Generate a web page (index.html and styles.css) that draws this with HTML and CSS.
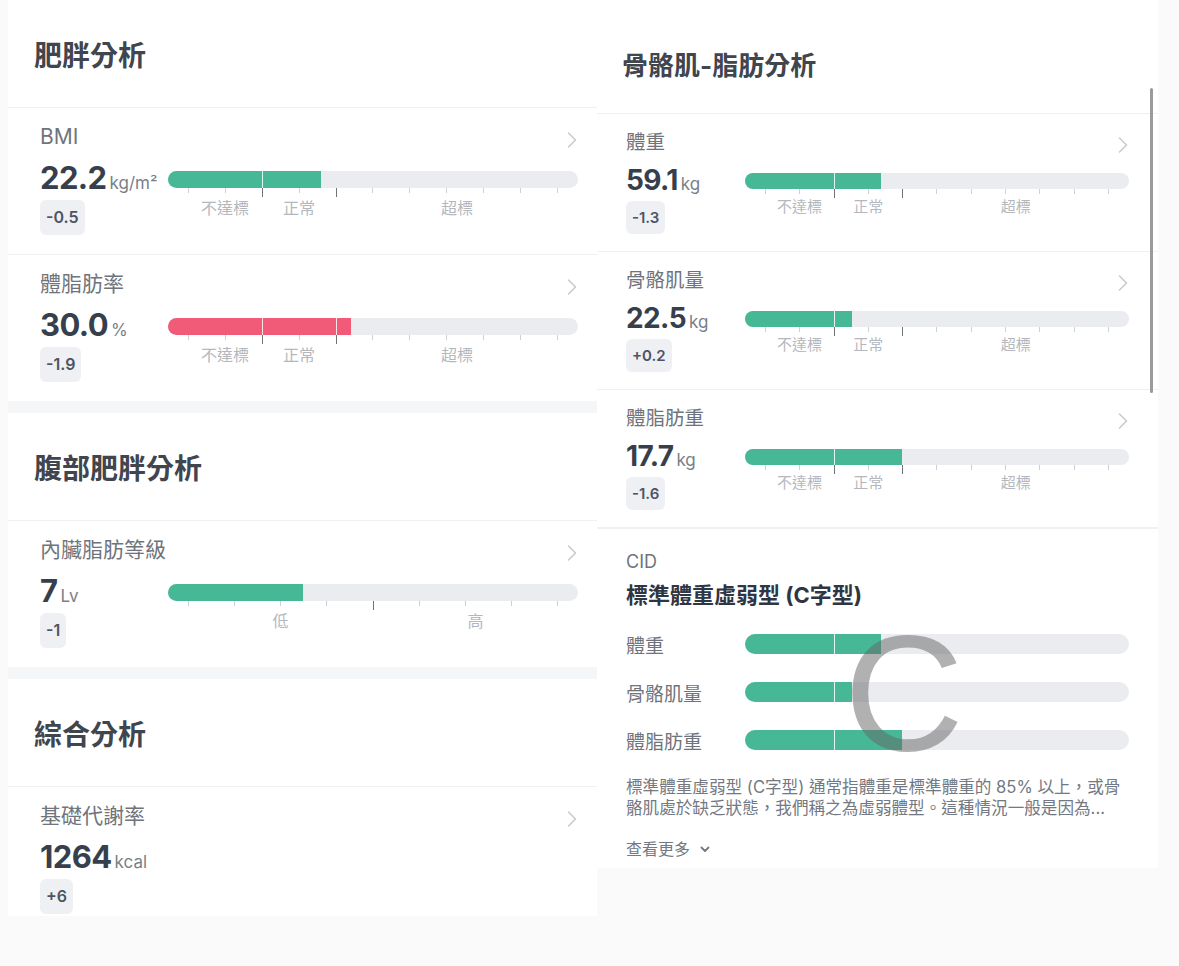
FILE: index.html
```html
<!DOCTYPE html>
<html lang="zh-Hant">
<head>
  <meta charset="UTF-8">
  <meta name="viewport" content="width=device-width, initial-scale=1.0">
  <title>身體組成分析</title>
  <link rel="stylesheet" href="styles.css">
</head>
<body>
<div class="page">

  <!-- Left column: obesity / abdominal / overall -->
  <div class="col col-left">

    <section class="card">
      <h2 class="card-title">肥胖分析</h2>

      <div class="metric">
        <div class="metric-head"><span class="metric-name">BMI</span><svg class="chev" viewBox="0 0 12 18"><polyline points="2.5,2 9.5,9 2.5,16"/></svg></div>
        <div class="metric-value"><b>22.2</b><span class="unit">kg/m²</span></div>
        <div class="gauge three">
          <div class="track"><div class="fill" style="width:37.3%"></div></div>
          <div class="ticks"><i></i><i></i><i class="major"></i><i></i><i class="major"></i><i></i><i></i><i></i><i></i><i></i><i></i></div>
          <div class="marks"><span>不達標</span><span>正常</span><span>超標</span></div>
        </div>
        <div class="delta">-0.5</div>
      </div>

      <div class="metric">
        <div class="metric-head"><span class="metric-name">體脂肪率</span><svg class="chev" viewBox="0 0 12 18"><polyline points="2.5,2 9.5,9 2.5,16"/></svg></div>
        <div class="metric-value"><b>30.0</b><span class="unit">%</span></div>
        <div class="gauge three">
          <div class="track"><div class="fill warn" style="width:44.6%"></div></div>
          <div class="ticks"><i></i><i></i><i class="major"></i><i></i><i class="major"></i><i></i><i></i><i></i><i></i><i></i><i></i></div>
          <div class="marks"><span>不達標</span><span>正常</span><span>超標</span></div>
        </div>
        <div class="delta">-1.9</div>
      </div>
    </section>

    <section class="card">
      <h2 class="card-title">腹部肥胖分析</h2>

      <div class="metric">
        <div class="metric-head"><span class="metric-name">內臟脂肪等級</span><svg class="chev" viewBox="0 0 12 18"><polyline points="2.5,2 9.5,9 2.5,16"/></svg></div>
        <div class="metric-value"><b>7</b><span class="unit">Lv</span></div>
        <div class="gauge two">
          <div class="track"><div class="fill" style="width:32.9%"></div></div>
          <div class="ticks"><i></i><i></i><i></i><i></i><i class="major"></i><i></i><i></i><i></i><i></i></div>
          <div class="marks"><span>低</span><span>高</span></div>
        </div>
        <div class="delta">-1</div>
      </div>
    </section>

    <section class="card">
      <h2 class="card-title">綜合分析</h2>

      <div class="metric cut">
        <div class="metric-head"><span class="metric-name">基礎代謝率</span><svg class="chev" viewBox="0 0 12 18"><polyline points="2.5,2 9.5,9 2.5,16"/></svg></div>
        <div class="metric-value"><b>1264</b><span class="unit">kcal</span></div>
        <div class="delta">+6</div>
      </div>
    </section>
  </div>

  <!-- Right column: skeletal muscle / fat + CID -->
  <div class="col col-right">
    <section class="card">
      <h2 class="card-title">骨骼肌-脂肪分析</h2>

      <div class="metric">
        <div class="metric-head"><span class="metric-name">體重</span><svg class="chev" viewBox="0 0 12 18"><polyline points="2.5,2 9.5,9 2.5,16"/></svg></div>
        <div class="metric-value"><b>59.1</b><span class="unit">kg</span></div>
        <div class="gauge three">
          <div class="track"><div class="fill" style="width:35.4%"></div></div>
          <div class="ticks"><i></i><i></i><i class="major"></i><i></i><i class="major"></i><i></i><i></i><i></i><i></i><i></i><i></i></div>
          <div class="marks"><span>不達標</span><span>正常</span><span>超標</span></div>
        </div>
        <div class="delta">-1.3</div>
      </div>

      <div class="metric">
        <div class="metric-head"><span class="metric-name">骨骼肌量</span><svg class="chev" viewBox="0 0 12 18"><polyline points="2.5,2 9.5,9 2.5,16"/></svg></div>
        <div class="metric-value"><b>22.5</b><span class="unit">kg</span></div>
        <div class="gauge three">
          <div class="track"><div class="fill" style="width:27.9%"></div></div>
          <div class="ticks"><i></i><i></i><i class="major"></i><i></i><i class="major"></i><i></i><i></i><i></i><i></i><i></i><i></i></div>
          <div class="marks"><span>不達標</span><span>正常</span><span>超標</span></div>
        </div>
        <div class="delta">+0.2</div>
      </div>

      <div class="metric">
        <div class="metric-head"><span class="metric-name">體脂肪重</span><svg class="chev" viewBox="0 0 12 18"><polyline points="2.5,2 9.5,9 2.5,16"/></svg></div>
        <div class="metric-value"><b>17.7</b><span class="unit">kg</span></div>
        <div class="gauge three">
          <div class="track"><div class="fill" style="width:40.9%"></div></div>
          <div class="ticks"><i></i><i></i><i class="major"></i><i></i><i class="major"></i><i></i><i></i><i></i><i></i><i></i><i></i></div>
          <div class="marks"><span>不達標</span><span>正常</span><span>超標</span></div>
        </div>
        <div class="delta">-1.6</div>
      </div>

      <!-- CID body type -->
      <div class="cid">
        <div class="cid-kicker">CID</div>
        <div class="cid-title">標準體重虛弱型 (C字型)</div>
        <div class="cid-rows">
          <div class="cid-row"><span>體重</span><div class="track"><div class="fill" style="width:35.4%"></div></div></div>
          <div class="cid-row"><span>骨骼肌量</span><div class="track"><div class="fill" style="width:27.9%"></div></div></div>
          <div class="cid-row"><span>體脂肪重</span><div class="track"><div class="fill" style="width:40.9%"></div></div></div>
          <span class="cid-letter">C</span>
        </div>
        <p class="cid-desc">標準體重虛弱型 (C字型) 通常指體重是標準體重的 85% 以上，或骨<br>骼肌處於缺乏狀態，我們稱之為虛弱體型。這種情況一般是因為...</p>
        <div class="more">查看更多 <svg class="chev-down" viewBox="0 0 10 7"><polyline points="1.5,1.5 5,5 8.5,1.5"/></svg></div>
      </div>
    </section>

    <div class="scroll-thumb"></div>
  </div>

</div>
</body>
</html>
```

FILE: styles.css
```css
/* Page */
body {
  margin: 0;
  background-color: #fafafa;
  font-family: Inter, "Noto Sans CJK TC", sans-serif;
  color: #394150;
}

.page {
  display: flex;
  align-items: flex-start;
  width: 1179px;
  height: 966px;
  overflow: hidden;
}

/* Columns */
.col-left {
  --lw: 128px;
  --bw: 410px;
  margin-left: 8px;
  width: 589px;
  display: flex;
  flex-direction: column;
  gap: 12px;
  background-color: #f5f6f8;
}

.col-right {
  --lw: 119px;
  --bw: 384px;
  position: relative;
  width: 561px;
}

.card {
  background: #fff;
}

/* Section title */
.card-title {
  margin: 0;
  padding: 38px 0 33px 26px;
  font-size: 28px;
  line-height: 36px;
  font-weight: 700;
  color: #40454e;
  border-bottom: 1px solid #eff0f2;
}

.col-right .card-title {
  padding: 49px 0 30px 25px;
  font-size: 26px;
  line-height: 34px;
}

/* Metric row */
.metric {
  display: grid;
  grid-template-columns: var(--lw) var(--bw);
  padding: 18px 19px 19px 32px;
  border-bottom: 1px solid #eff0f2;
}

.metric:last-child {
  border-bottom: none;
}

.metric.cut {
  padding-bottom: 2px;
}

.metric-head {
  grid-column: 1 / -1;
  display: flex;
  justify-content: space-between;
  align-items: center;
  height: 22px;
  margin-bottom: 12px;
}

.metric-name {
  font-size: 21px;
  line-height: 22px;
  color: #6f747c;
}

.chev {
  width: 12px;
  height: 18px;
  margin-top: 5px;
  fill: none;
  stroke: #c9cbcf;
  stroke-width: 1.6;
  stroke-linecap: round;
  stroke-linejoin: round;
}

.metric-value {
  grid-column: 1;
  grid-row: 2;
  display: flex;
  align-items: baseline;
  height: 36px;
  line-height: 36px;
}

.metric-value b {
  font-size: 31px;
  font-weight: 700;
  letter-spacing: -0.6px;
  color: #383f4c;
}

.unit {
  margin-left: 3px;
  font-size: 17px;
  color: #7a7f87;
}

.delta {
  grid-column: 1;
  grid-row: 3;
  justify-self: start;
  margin-top: 4px;
  height: 35px;
  padding: 0 6px;
  line-height: 35px;
  font-size: 16px;
  font-weight: 600;
  color: #4d5463;
  background-color: #eef0f3;
  border-radius: 6px;
}

/* Gauge bar */
.gauge {
  grid-column: 2;
  grid-row: 2 / span 2;
  align-self: start;
  margin-top: 11px;
}

.track {
  height: 17px;
  border-radius: 9px;
  background-color: #ebecf0;
  overflow: hidden;
}

.fill {
  position: relative;
  height: 100%;
  overflow: hidden;
  background-color: #47b896;
}

.fill.warn {
  background-color: #f15b78;
}

/* white cuts at the range boundaries */
.fill::before,
.fill::after {
  content: '';
  position: absolute;
  top: 0;
  bottom: 0;
  width: 1px;
  background: rgba(255, 255, 255, 0.85);
}

.three .fill::before,
.cid-row .fill::before {
  left: calc(20px + (var(--bw) - 40px) * 0.2);
}

.three .fill::after,
.cid-row .fill::after {
  left: calc(20px + (var(--bw) - 40px) * 0.4);
}

.two .fill::before {
  left: calc(20px + (var(--bw) - 40px) * 0.5);
}

.two .fill::after {
  display: none;
}

.ticks {
  display: flex;
  justify-content: space-between;
  height: 9px;
  padding: 0 20px;
}

.ticks i {
  width: 1px;
  height: 5px;
  background-color: #cdd0d4;
}

.ticks i.major {
  height: 9px;
  background-color: #6e7279;
}

.marks {
  display: grid;
  margin-top: 1px;
  padding-left: 20px;
  font-size: 16px;
  line-height: 20px;
  text-align: center;
  color: #b4b8be;
}

.three .marks {
  grid-template-columns: calc((var(--bw) - 40px) * 0.2) calc((var(--bw) - 40px) * 0.2) 1fr;
}

.two .marks {
  grid-template-columns: calc((var(--bw) - 40px) * 0.5) 1fr;
}

/* Right column sizes */
.col-right .metric {
  padding: 17px 29px 17px 29px;
}

.col-right .metric-head {
  margin-bottom: 10px;
}

.col-right .metric-name {
  font-size: 19.5px;
}

.col-right .metric-value {
  height: 34px;
  line-height: 34px;
}

.col-right .metric-value b {
  font-size: 28px;
}

.col-right .unit {
  font-size: 17px;
}

.col-right .gauge {
  margin-top: 10px;
}

.col-right .track {
  height: 16px;
  border-radius: 8px;
}

.col-right .marks {
  margin-top: 0;
  font-size: 15px;
  line-height: 18px;
}

.col-right .delta {
  height: 33px;
  line-height: 33px;
  font-size: 15px;
}

/* CID block */
.cid {
  padding: 21px 29px 8px;
  border-top: 1px solid #f0f1f3;
}

.cid-kicker {
  font-size: 18px;
  line-height: 24px;
  color: #6f747c;
}

.cid-title {
  margin-top: 6px;
  font-size: 22px;
  line-height: 30px;
  font-weight: 700;
  color: #2f3542;
}

.cid-rows {
  position: relative;
  margin-top: 10px;
}

.cid-row {
  display: flex;
  align-items: center;
  height: 48px;
}

.cid-row span {
  width: var(--lw);
  font-size: 19px;
  color: #6f747c;
}

.cid-row .track {
  width: var(--bw);
  height: 20px;
  border-radius: 10px;
}

.cid-letter {
  position: absolute;
  left: 218px;
  top: 3px;
  font-family: "Liberation Sans", sans-serif;
  font-weight: 400;
  font-size: 166px;
  line-height: 140px;
  color: rgba(100, 100, 100, 0.5);
}

.cid-desc {
  margin: 13px 0 0;
  width: 530px;
  font-size: 16.6px;
  line-height: 21px;
  color: #737882;
}

.more {
  display: flex;
  align-items: center;
  gap: 10px;
  margin-top: 19px;
  font-size: 16px;
  line-height: 22px;
  color: #737882;
}

.chev-down {
  width: 10px;
  height: 7px;
  fill: none;
  stroke: #737882;
  stroke-width: 1.8;
  stroke-linecap: round;
  stroke-linejoin: round;
}

/* Scroll indicator */
.scroll-thumb {
  position: absolute;
  left: 553px;
  top: 88px;
  width: 3px;
  height: 305px;
  border-radius: 2px;
  background-color: #9b9b9b;
}
```
